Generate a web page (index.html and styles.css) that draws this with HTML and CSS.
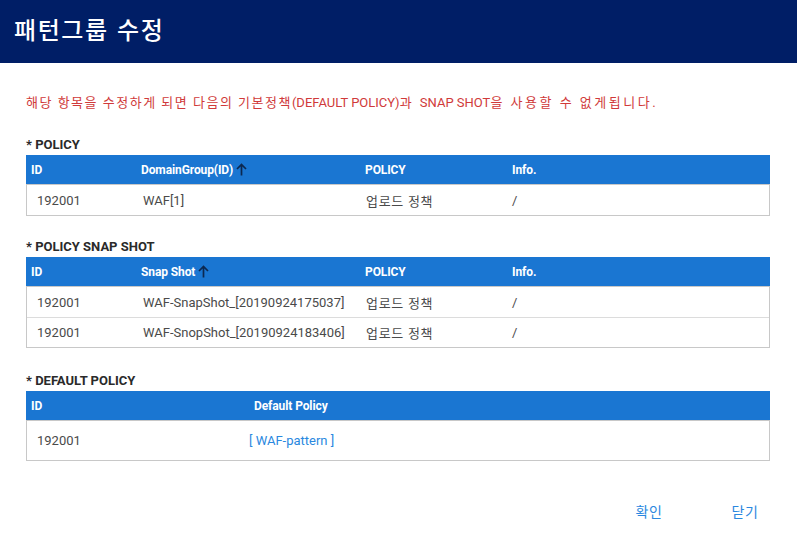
FILE: index.html
```html
<!DOCTYPE html>
<html lang="ko">
<head>
<meta charset="utf-8">
<title>패턴그룹 수정</title>
<link rel="stylesheet" href="styles.css">
</head>
<body>
<div class="dialog">
  <header class="dlg-head">
    <h1 class="dlg-title">패턴그룹 수정</h1>
  </header>
  <main class="dlg-body">
    <p class="warn">해당 항목을 수정하게 되면 다음의 기본정책<span class="en">(DEFAULT POLICY)</span><span class="tail">과 <span class="en">SNAP SHOT</span>을 사용할 수 없게됩니다.</span></p>

    <section class="sec sec-first">
      <h2 class="sec-title">* POLICY</h2>
      <div class="tbl">
        <div class="thead cols4h">
          <div class="th">ID</div>
          <div class="th">DomainGroup(ID) <svg class="arrow" width="11" height="13" viewBox="0 0 11 13"><path d="M5.5 12.5V1.5M1 6L5.5 1.5L10 6" fill="none" stroke="#0c2850" stroke-width="1.7"/></svg></div>
          <div class="th">POLICY</div>
          <div class="th">Info.</div>
        </div>
        <div class="tbody">
          <div class="tr cols4b">
            <div class="td">192001</div>
            <div class="td">WAF[1]</div>
            <div class="td ko">업로드 정책</div>
            <div class="td">/</div>
          </div>
        </div>
      </div>
    </section>

    <section class="sec sec-mid">
      <h2 class="sec-title">* POLICY SNAP SHOT</h2>
      <div class="tbl">
        <div class="thead cols4h">
          <div class="th">ID</div>
          <div class="th">Snap Shot <svg class="arrow" width="11" height="13" viewBox="0 0 11 13"><path d="M5.5 12.5V1.5M1 6L5.5 1.5L10 6" fill="none" stroke="#0c2850" stroke-width="1.7"/></svg></div>
          <div class="th">POLICY</div>
          <div class="th">Info.</div>
        </div>
        <div class="tbody">
          <div class="tr cols4b">
            <div class="td">192001</div>
            <div class="td">WAF-SnapShot_[20190924175037]</div>
            <div class="td ko">업로드 정책</div>
            <div class="td">/</div>
          </div>
          <div class="tr cols4b">
            <div class="td">192001</div>
            <div class="td">WAF-SnopShot_[20190924183406]</div>
            <div class="td ko">업로드 정책</div>
            <div class="td">/</div>
          </div>
        </div>
      </div>
    </section>

    <section class="sec sec-last">
      <h2 class="sec-title">* DEFAULT POLICY</h2>
      <div class="tbl">
        <div class="thead cols2h">
          <div class="th">ID</div>
          <div class="th">Default Policy</div>
        </div>
        <div class="tbody">
          <div class="tr tr-tall cols2b">
            <div class="td">192001</div>
            <div class="td"><a class="link" href="#">[ WAF-pattern ]</a></div>
          </div>
        </div>
      </div>
    </section>
  </main>
  <footer class="dlg-foot">
    <button class="btn" type="button">확인</button>
    <button class="btn" type="button">닫기</button>
  </footer>
</div>
</body>
</html>
```
FILE: styles.css
```css
* { box-sizing: border-box; }
html, body { margin: 0; padding: 0; background: #fff; }
body {
  font-family: Roboto, "Noto Sans CJK KR", sans-serif;
  color: #4a4a4a;
  width: 797px;
  height: 538px;
  overflow: hidden;
}
.dlg-head {
  height: 63px;
  background: #001e66;
  display: flex;
  align-items: center;
  padding-left: 14px;
}
.dlg-title {
  margin: 0;
  font-family: "Noto Sans CJK KR", sans-serif;
  font-weight: 500;
  font-size: 24px;
  letter-spacing: 1.6px;
  color: #fff;
  line-height: 1;
  position: relative;
  top: -3px;
}
.dlg-body {
  padding: 0 27px 0 26px;
}
.warn {
  margin: 30px 0 0;
  font-size: 13px;
  line-height: 20px;
  color: #d03a3a;
  letter-spacing: 1.5px;
  white-space: nowrap;
}
.warn .tail { letter-spacing: 2.5px; }
.warn .en { letter-spacing: 0; }
.sec-first { margin-top: 22px; }
.sec-mid { margin-top: 21px; }
.sec-last { margin-top: 23px; }
.sec-title {
  margin: 0;
  font-size: 13px;
  font-weight: 700;
  line-height: 20px;
  color: #2a2a2a;
}
.tbl { width: 744px; }
.thead {
  background: #1a76d2;
  height: 29px;
  display: grid;
  align-items: center;
}
.th {
  color: #fff;
  font-size: 12px;
  font-weight: 700;
  padding-left: 5px;
  letter-spacing: -0.1px;
  display: flex;
  align-items: center;
  white-space: nowrap;
}
.arrow { margin-left: 3px; }
.cols4h { grid-template-columns: 110px 224px 147px 1fr; }
.cols2h { grid-template-columns: 223px 1fr; }
.tbody {
  border: 1px solid #c8c8c8;
  border-top: none;
  width: 744px;
}
.tr {
  display: grid;
  align-items: center;
  height: 30px;
  border-top: 1px solid #dcdcdc;
}
.tr:first-child { border-top: 1px solid #c8c8c8; height: 31px; }
.tr-tall, .tr-tall:first-child { height: 40px; }
.cols4b { grid-template-columns: 106px 223px 146px 1fr; }
.cols2b { grid-template-columns: 212px 1fr; }
.td {
  font-size: 13px;
  padding-left: 10px;
  color: #4a4a4a;
  white-space: nowrap;
}
.td.ko { letter-spacing: 0.7px; }
.link {
  color: #2a88e0;
  text-decoration: none;
}
.dlg-foot {
  display: flex;
  justify-content: flex-end;
  gap: 8px;
  padding-right: 8px;
  margin-top: 37px;
}
.btn {
  width: 88px;
  height: 26px;
  border: none;
  background: transparent;
  color: #2a88e0;
  font-family: "Noto Sans CJK KR", sans-serif;
  font-size: 14px;
  letter-spacing: 0.5px;
  padding: 0;
  cursor: pointer;
}
```
